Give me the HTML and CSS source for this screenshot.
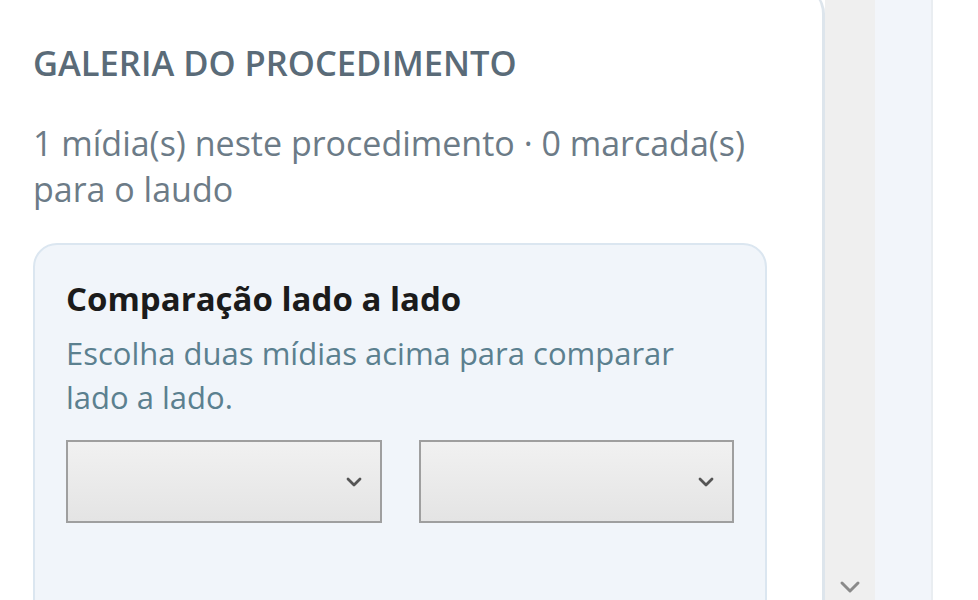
FILE: index.html
```html
<!DOCTYPE html>
<html lang="pt-BR">
<head>
<meta charset="utf-8">
<title>Galeria do procedimento</title>
<link rel="stylesheet" href="styles.css">
</head>
<body>
<div class="page">
  <section class="card">
    <h2 class="title">GALERIA DO PROCEDIMENTO</h2>
    <p class="meta">1 mídia(s) neste procedimento · 0 marcada(s) para o laudo</p>
    <div class="compare">
      <h3 class="compare-title">Comparação lado a lado</h3>
      <p class="compare-desc">Escolha duas mídias acima para comparar lado a lado.</p>
      <div class="selects">
        <div class="select" role="combobox" aria-label="Mídia 1">
          <svg class="chev" width="16" height="10" viewBox="0 0 16 10"><path d="M2 2 L8 8 L14 2" fill="none" stroke="#555" stroke-width="2.8" stroke-linecap="round" stroke-linejoin="round"/></svg>
        </div>
        <div class="select" role="combobox" aria-label="Mídia 2">
          <svg class="chev" width="16" height="10" viewBox="0 0 16 10"><path d="M2 2 L8 8 L14 2" fill="none" stroke="#555" stroke-width="2.8" stroke-linecap="round" stroke-linejoin="round"/></svg>
        </div>
      </div>
    </div>
  </section>
  <div class="track">
    <svg class="track-chev" width="22" height="14" viewBox="0 0 22 14"><path d="M3 3 L11 11 L19 3" fill="none" stroke="#8a8a8a" stroke-width="3" stroke-linecap="round" stroke-linejoin="round"/></svg>
  </div>
  <div class="side"></div>
  <div class="rest"></div>
</div>
</body>
</html>
```

FILE: styles.css
```css
html, body {
  margin: 0;
  padding: 0;
  background: #ffffff;
}
body {
  font-family: "Open Sans", "Noto Sans", sans-serif;
}
.page {
  display: flex;
  height: 600px;
  overflow: hidden;
}
.card {
  box-sizing: border-box;
  width: 825px;
  height: 640px;
  margin-top: -14px;
  flex: none;
  background: #ffffff;
  border-right: 3px solid #dde5ec;
  border-top-right-radius: 28px;
  padding: 55px 55px 0 33px;
}
.title {
  margin: 0;
  font-size: 34.5px;
  line-height: 44px;
  font-weight: 600;
  color: #5a6b78;
}
.meta {
  margin: 35px 0 0;
  font-size: 34px;
  line-height: 46px;
  color: #6c7b87;
}
.compare {
  margin-top: 31px;
  background: #f1f5fa;
  border: 2px solid #dbe6f0;
  border-radius: 24px;
  padding: 32px 31px 80px;
  height: 420px;
}
.compare-title {
  margin: 0;
  font-size: 33px;
  line-height: 44px;
  font-weight: 700;
  color: #1b1b1b;
}
.compare-desc {
  margin: 10px 0 0;
  font-size: 31px;
  line-height: 44px;
  color: #5b808f;
}
.selects {
  display: flex;
  gap: 37px;
  margin-top: 21px;
}
.select {
  box-sizing: border-box;
  width: 316px;
  height: 83px;
  border: 2px solid #9f9f9f;
  background: linear-gradient(#f1f1f1, #e4e4e4);
  display: flex;
  align-items: center;
  justify-content: flex-end;
  padding-right: 18px;
}
.track {
  width: 50px;
  flex: none;
  background: #efefef;
  display: flex;
  flex-direction: column;
  justify-content: flex-end;
  align-items: center;
  padding-bottom: 6px;
  box-sizing: border-box;
}
.side {
  width: 56px;
  flex: none;
  background: #f2f5fa;
  border-right: 2px solid #e9edf1;
}
.rest {
  flex: 1;
  background: #ffffff;
}
```
